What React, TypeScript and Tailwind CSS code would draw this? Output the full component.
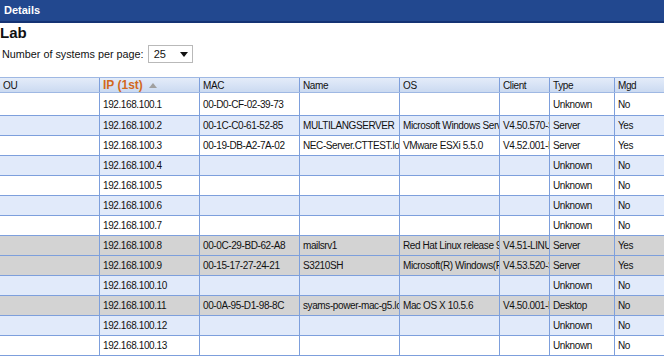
import React from 'react';

type Row = {
  ip: string;
  mac: string;
  name: string;
  os: string;
  client: string;
  type: string;
  mgd: string;
  gray?: boolean;
};

const rows: Row[] = [
  { ip: '192.168.100.1', mac: '00-D0-CF-02-39-73', name: '', os: '', client: '', type: 'Unknown', mgd: 'No' },
  { ip: '192.168.100.2', mac: '00-1C-C0-61-52-85', name: 'MULTILANGSERVER', os: 'Microsoft Windows Server 2008', client: 'V4.50.570-SRV', type: 'Server', mgd: 'Yes' },
  { ip: '192.168.100.3', mac: '00-19-DB-A2-7A-02', name: 'NEC-Server.CTTEST.local', os: 'VMware ESXi 5.5.0', client: 'V4.52.001-ESX', type: 'Server', mgd: 'Yes' },
  { ip: '192.168.100.4', mac: '', name: '', os: '', client: '', type: 'Unknown', mgd: 'No' },
  { ip: '192.168.100.5', mac: '', name: '', os: '', client: '', type: 'Unknown', mgd: 'No' },
  { ip: '192.168.100.6', mac: '', name: '', os: '', client: '', type: 'Unknown', mgd: 'No' },
  { ip: '192.168.100.7', mac: '', name: '', os: '', client: '', type: 'Unknown', mgd: 'No' },
  { ip: '192.168.100.8', mac: '00-0C-29-BD-62-A8', name: 'mailsrv1', os: 'Red Hat Linux release 9', client: 'V4.51-LINUX', type: 'Server', mgd: 'Yes', gray: true },
  { ip: '192.168.100.9', mac: '00-15-17-27-24-21', name: 'S3210SH', os: 'Microsoft(R) Windows(R) Server', client: 'V4.53.520-SRV', type: 'Server', mgd: 'Yes', gray: true },
  { ip: '192.168.100.10', mac: '', name: '', os: '', client: '', type: 'Unknown', mgd: 'No' },
  { ip: '192.168.100.11', mac: '00-0A-95-D1-98-8C', name: 'syams-power-mac-g5.local', os: 'Mac OS X 10.5.6', client: 'V4.50.001-MAC', type: 'Desktop', mgd: 'No', gray: true },
  { ip: '192.168.100.12', mac: '', name: '', os: '', client: '', type: 'Unknown', mgd: 'No' },
  { ip: '192.168.100.13', mac: '', name: '', os: '', client: '', type: 'Unknown', mgd: 'No' },
];

const cell = 'shrink-0 overflow-hidden whitespace-nowrap border-r border-[#7d9fdc] pl-[3px] flex items-center';

const App = () => {
  return (
    <div className="w-[664px] h-[356px] overflow-hidden bg-white text-[#111]" style={{ fontFamily: '"Liberation Sans", Arial, sans-serif' }}>
      {/* Title bar */}
      <div className="h-[23px] bg-[#22488f] border-b-2 border-[#143374] flex items-center pl-[4px]">
        <span className="text-white font-bold text-[11px]">Details</span>
      </div>

      <div className="font-bold text-[15px] leading-[17px] pt-[1px]">Lab</div>

      {/* Page size */}
      <div className="flex items-center h-[20px] mt-[3px] pl-[2px]">
        <span className="text-[10.8px]">Number of systems per page:</span>
        <div className="ml-[4px] w-[45px] h-[18px] border border-[#b9b9b9] bg-white flex items-center justify-between pl-[5px] pr-[4px]">
          <span className="text-[11px]">25</span>
          <svg width="8" height="5" viewBox="0 0 8 5"><path d="M0 0 L8 0 L4 5 Z" fill="#111" /></svg>
        </div>
      </div>

      {/* Table */}
      <div className="mt-[13px] text-[10px] tracking-[-0.4px]">
        <div className="flex h-[16px] border-t border-[#1f3f8f] bg-gradient-to-b from-[#e4ecf9] to-[#cbdaf1] border-b border-[#9fb8e3]">
          <div className={`${cell} w-[100px]`}>OU</div>
          <div className={`${cell} w-[100px] text-[#d2691e] text-[12px] font-bold tracking-normal`}>
            IP (1st)
            <svg className="ml-[6px]" width="8" height="5" viewBox="0 0 8 5"><path d="M0 5 L4 0 L8 5 Z" fill="#a0a0a0" /></svg>
          </div>
          <div className={`${cell} w-[100px]`}>MAC</div>
          <div className={`${cell} w-[100px]`}>Name</div>
          <div className={`${cell} w-[100px]`}>OS</div>
          <div className={`${cell} w-[50px]`}>Client</div>
          <div className={`${cell} w-[65px]`}>Type</div>
          <div className={`${cell} flex-1 border-r-0`}>Mgd</div>
        </div>
        {rows.map((r, i) => (
          <div
            key={r.ip}
            className={`flex border-b border-[#7d9fdc] ${i === 0 ? 'h-[23px]' : 'h-[20px]'} ${
              r.gray ? 'bg-[#d3d3d3]' : i % 2 === 1 ? 'bg-[#e1eafa]' : 'bg-white'
            }`}
          >
            <div className={`${cell} w-[100px]`}></div>
            <div className={`${cell} w-[100px]`}>{r.ip}</div>
            <div className={`${cell} w-[100px]`}>{r.mac}</div>
            <div className={`${cell} w-[100px]`}>{r.name}</div>
            <div className={`${cell} w-[100px]`}>{r.os}</div>
            <div className={`${cell} w-[50px]`}>{r.client}</div>
            <div className={`${cell} w-[65px]`}>{r.type}</div>
            <div className={`${cell} flex-1 border-r-0`}>{r.mgd}</div>
          </div>
        ))}
      </div>
    </div>
  );
};

export default App;
